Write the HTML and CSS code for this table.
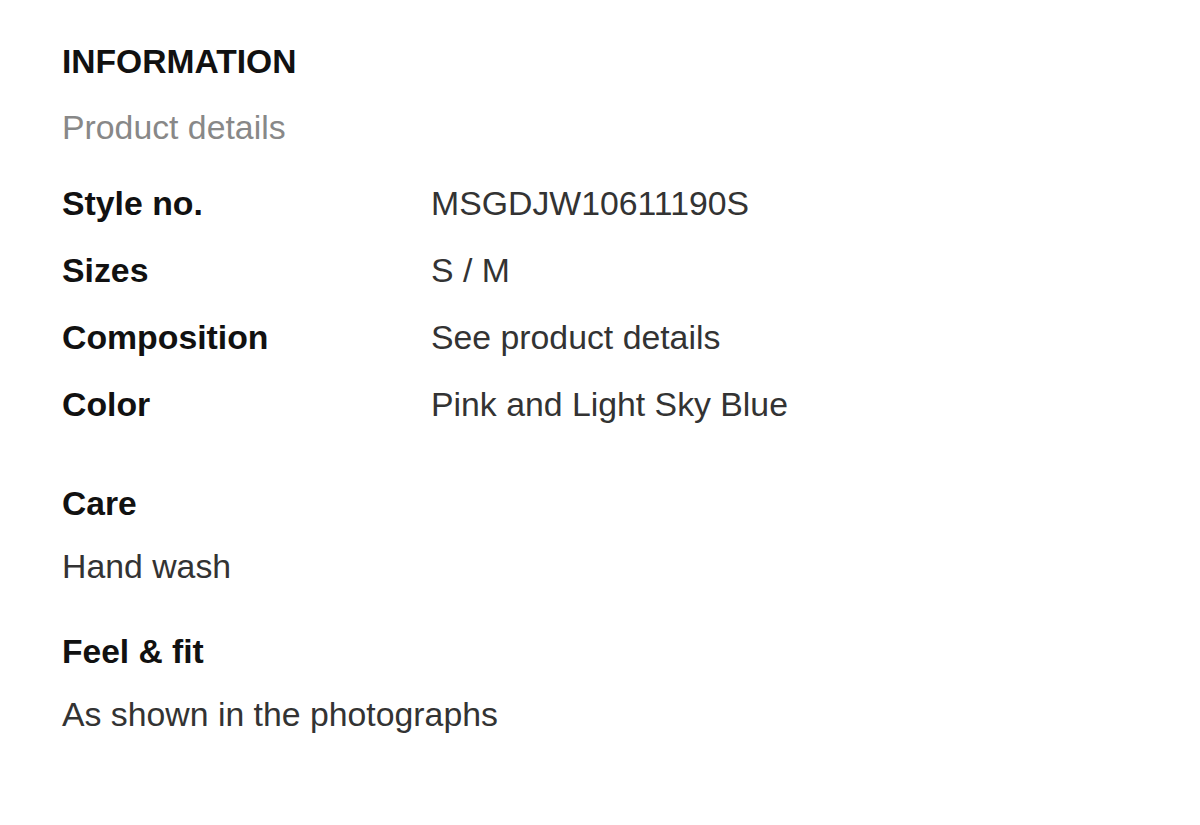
FILE: index.html
```html
<!DOCTYPE html>
<html lang="en">

<head>
    <meta charset="UTF-8">
    <meta name="viewport" content="width=device-width, initial-scale=1.0">
    <title>Information</title>

    <link rel="stylesheet" href="styles.css">
</head>

<body>
    <div class="info">
        <h2 class="info-title">INFORMATION</h2>
        <p class="info-sub">Product details</p>

        <ul class="spec">
            <li><span class="spec-key">Style no.</span><span class="spec-val">MSGDJW10611190S</span></li>
            <li><span class="spec-key">Sizes</span><span class="spec-val">S / M</span></li>
            <li><span class="spec-key">Composition</span><span class="spec-val">See product details</span></li>
            <li><span class="spec-key">Color</span><span class="spec-val">Pink and Light Sky Blue</span></li>
        </ul>

        <div class="block block-care">
            <h3 class="block-title">Care</h3>
            <p class="block-text">Hand wash</p>
        </div>

        <div class="block block-fit">
            <h3 class="block-title">Feel &amp; fit</h3>
            <p class="block-text">As shown in the photographs</p>
        </div>
    </div>
</body>

</html>
```

FILE: styles.css
```css
* {
    margin: 0;
    padding: 0;
    list-style: none;
}

body {
    background: #fff;
    font-family: "Liberation Sans", Arial, sans-serif;
    font-size: 33.8px;
    color: #333;
}

.info {
    padding: 42px 0 0 62px;
}

.info-title {
    font-size: 33.6px;
    line-height: 40px;
    font-weight: bold;
    color: #111;
}

.info-sub {
    line-height: 40px;
    margin-top: 25px;
    color: #888;
}

.spec {
    margin-top: 23px;
}

.spec li {
    display: grid;
    grid-template-columns: 369px 1fr;
    line-height: 67px;
}

.spec-key {
    font-weight: bold;
    color: #111;
}

.spec-val {
    color: #333;
}

.block-care {
    margin-top: 46px;
}

.block-fit {
    margin-top: 46px;
}

.block-title {
    font-size: 33.6px;
    line-height: 40px;
    font-weight: bold;
    color: #111;
}

.block-text {
    line-height: 40px;
    margin-top: 22px;
    color: #333;
}
```
